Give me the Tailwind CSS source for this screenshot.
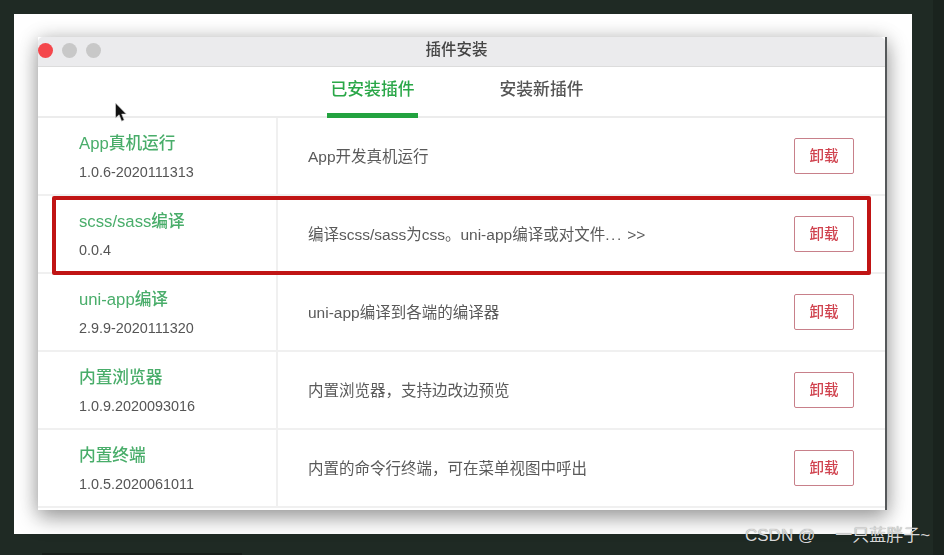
<!DOCTYPE html>
<html lang="zh-CN">
<head>
<meta charset="utf-8">
<script src="https://cdn.jsdelivr.net/npm/@tailwindcss/browser@4"></script>
<title>插件安装</title>
</head>
<body class="bg-[#1f2a24]">
<div class="relative h-[555px] w-[944px] overflow-hidden bg-[#1f2a24] font-['Liberation_Sans','Noto_Sans_CJK_SC',sans-serif]">
  <div class="absolute inset-y-0 right-0 w-[11px] bg-[#1a231e]"></div>
  <div class="absolute bottom-0 left-[42px] h-[2px] w-[200px] bg-[#171e1a] blur-[0.5px]"></div>
  <div class="blur-[0.6px]">
    <div class="ml-[14px] mt-[14px] inline-block h-[520px] w-[898px] bg-white pl-[24px] pt-[23px]">
      <div class="h-[473px] w-[849px] border-r-2 border-r-[#55585a] bg-white shadow-[0_8px_20px_rgba(0,0,0,0.35),0_0_18px_rgba(0,0,0,0.15)]">
        <div class="relative flex h-[30px] items-center justify-center rounded-t-[5px] border-b border-[#dcdcdc] bg-[#ebebed] pb-[3px] pr-[10px]">
          <div class="absolute left-0 top-[6px] flex gap-[9px]">
            <span class="size-[15px] rounded-full bg-[#f4474c]"></span>
            <span class="size-[15px] rounded-full bg-[#c8c8c8]"></span>
            <span class="size-[15px] rounded-full bg-[#c8c8c8]"></span>
          </div>
          <span class="text-[15.5px] font-medium leading-none text-[#444]">插件安装</span>
        </div>
        <div class="flex h-[51px] items-stretch gap-[78px] border-b-2 border-[#ececec] pl-[289px] text-[16.8px] font-medium">
          <div class="-mb-[2px] flex w-[91px] items-center justify-center border-b-[5px] border-[#22a23f] text-[#2aa748]">已安装插件</div>
          <div class="-mb-[2px] flex w-[91px] items-center justify-center border-b-[5px] border-transparent text-[#555]">安装新插件</div>
        </div>
        <div class="flex h-[78px] border-b-2 border-[#f0f0f0]">
          <div class="flex w-[240px] flex-col justify-center gap-[10px] border-r-2 border-[#f0f0f0] pl-[41px] pt-[1px]">
            <div class="text-[16.7px] font-medium leading-[20px] text-[#49ad6a]">App真机运行</div>
            <div class="text-[14.4px] leading-[16px] text-[#555]">1.0.6-2020111313</div>
          </div>
          <div class="flex flex-1 items-center justify-between pl-[30px] pr-[31px]">
            <span class="mt-[2px] text-[15.5px] text-[#5a5a5a]">App开发真机运行</span>
            <button class="flex h-[36px] w-[60px] items-center justify-center rounded-[2px] border border-[#c8808a] pt-[1px] text-[14.5px] font-medium text-[#d0434f]">卸载</button>
          </div>
        </div>
        <div class="flex h-[78px] border-b-2 border-[#f0f0f0]">
          <div class="flex w-[240px] flex-col justify-center gap-[10px] border-r-2 border-[#f0f0f0] pl-[41px] pt-[1px]">
            <div class="text-[16.7px] font-medium leading-[20px] text-[#49ad6a]">scss/sass编译</div>
            <div class="text-[14.4px] leading-[16px] text-[#555]">0.0.4</div>
          </div>
          <div class="flex flex-1 items-center justify-between pl-[30px] pr-[31px]">
            <span class="mt-[2px] text-[15.5px] text-[#5a5a5a]">编译scss/sass为css。uni-app编译或对文件<span class="tracking-[1.6px]">...</span> &gt;&gt;</span>
            <button class="flex h-[36px] w-[60px] items-center justify-center rounded-[2px] border border-[#c8808a] pt-[1px] text-[14.5px] font-medium text-[#d0434f]">卸载</button>
          </div>
        </div>
        <div class="flex h-[78px] border-b-2 border-[#f0f0f0]">
          <div class="flex w-[240px] flex-col justify-center gap-[10px] border-r-2 border-[#f0f0f0] pl-[41px] pt-[1px]">
            <div class="text-[16.7px] font-medium leading-[20px] text-[#49ad6a]">uni-app编译</div>
            <div class="text-[14.4px] leading-[16px] text-[#555]">2.9.9-2020111320</div>
          </div>
          <div class="flex flex-1 items-center justify-between pl-[30px] pr-[31px]">
            <span class="mt-[2px] text-[15.5px] text-[#5a5a5a]">uni-app编译到各端的编译器</span>
            <button class="flex h-[36px] w-[60px] items-center justify-center rounded-[2px] border border-[#c8808a] pt-[1px] text-[14.5px] font-medium text-[#d0434f]">卸载</button>
          </div>
        </div>
        <div class="flex h-[78px] border-b-2 border-[#f0f0f0]">
          <div class="flex w-[240px] flex-col justify-center gap-[10px] border-r-2 border-[#f0f0f0] pl-[41px] pt-[1px]">
            <div class="text-[16.7px] font-medium leading-[20px] text-[#49ad6a]">内置浏览器</div>
            <div class="text-[14.4px] leading-[16px] text-[#555]">1.0.9.2020093016</div>
          </div>
          <div class="flex flex-1 items-center justify-between pl-[30px] pr-[31px]">
            <span class="mt-[2px] text-[15.5px] text-[#5a5a5a]">内置浏览器，支持边改边预览</span>
            <button class="flex h-[36px] w-[60px] items-center justify-center rounded-[2px] border border-[#c8808a] pt-[1px] text-[14.5px] font-medium text-[#d0434f]">卸载</button>
          </div>
        </div>
        <div class="flex h-[78px] border-b-2 border-[#f0f0f0]">
          <div class="flex w-[240px] flex-col justify-center gap-[10px] border-r-2 border-[#f0f0f0] pl-[41px] pt-[1px]">
            <div class="text-[16.7px] font-medium leading-[20px] text-[#49ad6a]">内置终端</div>
            <div class="text-[14.4px] leading-[16px] text-[#555]">1.0.5.2020061011</div>
          </div>
          <div class="flex flex-1 items-center justify-between pl-[30px] pr-[31px]">
            <span class="mt-[2px] text-[15.5px] text-[#5a5a5a]">内置的命令行终端，可在菜单视图中呼出</span>
            <button class="flex h-[36px] w-[60px] items-center justify-center rounded-[2px] border border-[#c8808a] pt-[1px] text-[14.5px] font-medium text-[#d0434f]">卸载</button>
          </div>
        </div>
      </div>
    </div>
  </div>
  <div class="absolute left-[52px] top-[196px] h-[79px] w-[819px] rounded-[2px] border-[4px] border-[#c01414] blur-[0.4px]"></div>
  <svg class="absolute left-[114px] top-[102px] blur-[0.3px]" width="14" height="21" viewBox="0 0 14 21"><path d="M1.5 1v15l3.6-3.2 2.5 6.4 2.6-1.1-2.5-6h4.6z" fill="#111" stroke="#ddd" stroke-width="0.6"/></svg>
  <div class="absolute left-[745px] top-[526px] whitespace-nowrap text-[17px] leading-[20px] text-[#d8d8d8] [text-shadow:0_0_1px_rgba(0,0,0,0.45)]">CSDN @<span class="ml-[20px]">一只蓝胖子~</span></div>
</div>
</body>
</html>
